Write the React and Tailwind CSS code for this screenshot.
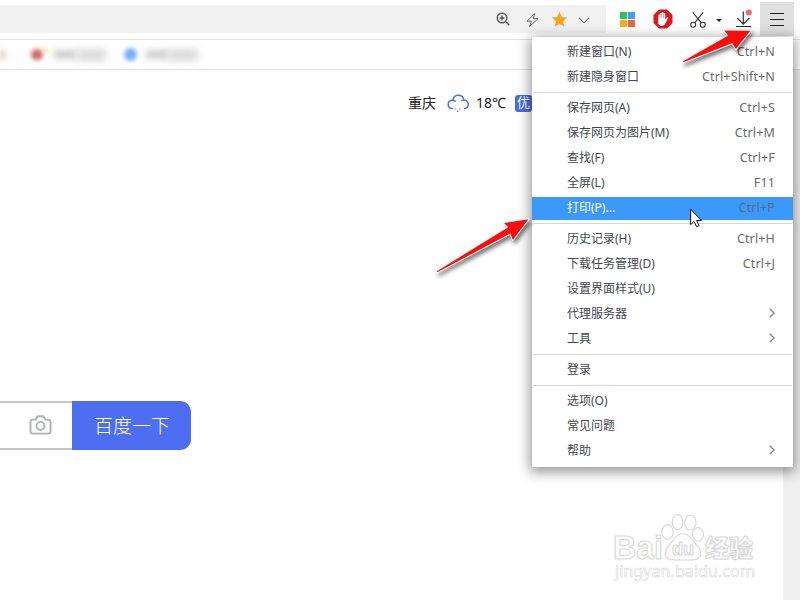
import { Fragment } from "react";

const MENU_GROUPS = [
  [
    { label: "新建窗口(N)", shortcut: "Ctrl+N" },
    { label: "新建隐身窗口", shortcut: "Ctrl+Shift+N" },
  ],
  [
    { label: "保存网页(A)", shortcut: "Ctrl+S" },
    { label: "保存网页为图片(M)", shortcut: "Ctrl+M" },
    { label: "查找(F)", shortcut: "Ctrl+F" },
    { label: "全屏(L)", shortcut: "F11" },
    { label: "打印(P)...", shortcut: "Ctrl+P", active: true },
  ],
  [
    { label: "历史记录(H)", shortcut: "Ctrl+H" },
    { label: "下载任务管理(D)", shortcut: "Ctrl+J" },
    { label: "设置界面样式(U)" },
    { label: "代理服务器", submenu: true },
    { label: "工具", submenu: true },
  ],
  [{ label: "登录" }],
  [{ label: "选项(O)" }, { label: "常见问题" }, { label: "帮助", submenu: true }],
];

function AddressBar() {
  return (
    <div className="flex h-7 w-[606px] items-center justify-end bg-[#f1f1f1] pr-4">
      <svg className="mr-[16px] h-[14px] w-[14px]" viewBox="0 0 14 14" fill="none" stroke="#555" strokeWidth="1.4">
        <circle cx="6" cy="6" r="4.8" />
        <path d="M9.5 9.5 13.3 13.3M3.6 6h4.8M6 3.6v4.8" />
      </svg>
      <svg className="mt-[2px] mr-[13px] h-[14px] w-[13px]" viewBox="0 0 13 14" fill="none" stroke="#666" strokeWidth="1" strokeLinejoin="round">
        <path d="M8.600.6 1 8.200h4.400L3.600 13.400 12 5.600H7.200z" />
      </svg>
      <svg className="mr-[11px] h-[15px] w-[15px]" viewBox="0 0 15 15" fill="#f8a51b">
        <path d="M7.5 0 9.8 5l5.2.6-3.9 3.6 1.1 5.4-4.7-2.7-4.7 2.7 1.1-5.4L0 5.600 5.200 5z" />
      </svg>
      <svg className="mt-[3px] h-[7px] w-[12px]" viewBox="0 0 12 7" fill="none" stroke="#666" strokeWidth="1.1">
        <path d="M.8.8 6 5.800 11.200.8" />
      </svg>
    </div>
  );
}

function Toolbar() {
  return (
    <div className="flex h-[39px] pt-[2px]">
      <div className="pt-[3px]">
        <AddressBar />
      </div>
      <div className="flex h-[34px] flex-1 items-center pl-[14px]">
        <div className="mt-[1px] grid h-[15px] w-[15px] grid-cols-2 gap-px">
          <span className="bg-[#2cc069]" />
          <span className="bg-[#3aa3ee]" />
          <span className="bg-[#f6ae17]" />
          <span className="bg-[#f26247]" />
        </div>
        <svg className="ml-[18px] h-5 w-5" viewBox="0 0 20 20">
          <path d="M6.100.5h7.800l5.600 5.600v7.800l-5.600 5.600H6.100L.5 13.900V6.100z" fill="#e1161c" />
          <path
            d="M5.200 9.500V6.300q0-.8.8-.8t.8.8V4.600q0-.8.9-.8t.9.8V4q0-.9.9-.9t.9.9v.7q0-.8.9-.8t.9.8v5.700l1.200-1.600q.9-.9 1.800-.2l-2.500 5.500q-1.100 2.900-3.800 2.900-3.700 0-3.700-3.800z"
            fill="#fff"
          />
          <path d="M6.900 5.500v3.500M8.700 4.800v4.100M10.500 5v4" stroke="#e1161c" strokeWidth=".4" />
        </svg>
        <svg className="ml-[17px] mt-[1px] h-4 w-4" viewBox="0 0 16 16" fill="none" stroke="#333" strokeWidth="1.1">
          <circle cx="3.200" cy="12.700" r="2.500" />
          <circle cx="12.800" cy="12.700" r="2.500" />
          <path d="M2.800.3 11.300 10.800M13.200.3 4.700 10.800" />
        </svg>
        <svg className="ml-[10px] mt-[3px] h-[3px] w-[6px]" viewBox="0 0 6 3">
          <path d="M0 0h6L3 3z" fill="#222" />
        </svg>
        <svg className="ml-[13px] -mt-[3px] h-5 w-[18px]" viewBox="0 0 18 20" fill="none">
          <path d="M8.300 3.500v12.500M2.200 10l6.100 6.200 6.100-6.200" stroke="#333" strokeWidth="1.200" />
          <path d="M1 18.500h15" stroke="#222" strokeWidth="1" />
          <circle cx="13.800" cy="4.500" r="3" fill="#ed6b6b" />
        </svg>
        <div className="ml-[7px] flex h-[34px] w-[34px] flex-col items-center justify-center gap-[5px] bg-[#e0e0e0]">
          <span className="h-px w-[14px] bg-[#222]" />
          <span className="h-px w-[14px] bg-[#222]" />
          <span className="h-px w-[14px] bg-[#222]" />
        </div>
      </div>
    </div>
  );
}

function BookmarksBar() {
  return (
    <div className="flex h-[31px] items-center overflow-hidden border-y border-[#e2e2e2]">
      <span className="h-2 w-[5px] bg-[#c9b8b2] blur-[3px]" />
      <span className="ml-[26px] h-[11px] w-[12px] rounded-full bg-[#cf6a68] blur-[2px]" />
      <span className="-mt-2 h-[5px] w-[5px] rounded-full bg-[#f5d99a] blur-[2px]" />
      <span className="ml-[6px] h-[9px] w-[22px] bg-[#cfcfcf] blur-[3px]" />
      <span className="h-[10px] w-[30px] bg-[#d4d4d4] blur-[4px]" />
      <span className="ml-[18px] h-[13px] w-[13px] rounded-full bg-[#76adfb] blur-[2px]" />
      <span className="ml-[9px] h-[9px] w-[22px] bg-[#cfcfcf] blur-[3px]" />
      <span className="h-[10px] w-[30px] bg-[#d4d4d4] blur-[4px]" />
    </div>
  );
}

function Weather() {
  return (
    <div className="-mt-px flex h-5 items-center pl-[408px] text-[14px] text-[#222]">
      <span className="w-[29px] whitespace-nowrap">重庆</span>
      <svg className="ml-[10px] mt-[2px] h-5 w-[23px]" viewBox="0 0 23 20" fill="none" stroke="#4a74e0" strokeWidth="1.500" strokeLinecap="round">
        <path d="M5.500 15.500C2.800 15.300 1.200 13.700 1.200 11.400c0-2.200 1.500-3.800 3.700-4.100M6.200 6.200C6.800 3.700 8.700 2.200 11.200 2.200c2.900 0 4.900 1.700 5.500 4.300M15 7.400c3.500-1.200 6.300.9 6.300 3.900 0 2.400-1.500 4-3.800 4.200M5.300 7.200c1.300 0 2.200.4 2.900 1.100" />
        <path d="M8.300 15.800v.1M13 15.800v.1M10.600 18.300v.1" strokeWidth="1.300" />
      </svg>
      <span className="ml-[6px] w-[31px] whitespace-nowrap">18℃</span>
      <span className="ml-[8px] mt-[2px] flex h-[17px] w-[17px] items-center justify-center rounded-[3px] bg-[#4b6ee0] text-[13px] text-white">优</span>
    </div>
  );
}

function SearchBox() {
  return (
    <div className="flex h-[49px]">
      <div className="flex w-[72px] items-center justify-end border-y-2 border-[#c4c7ce] pr-[20px]">
        <svg className="-mt-[2px] h-[20px] w-[23px]" viewBox="0 0 23 20" fill="none" stroke="#afb1b7" strokeWidth="1.900">
          <path d="M3.500 4.600h3.100l1.500-2.500q.6-.9 1.600-.9h3.600q1 0 1.600.9l1.500 2.500h3.100q2 0 2 2v10q0 2-2 2h-16q-2 0-2-2v-10q0-2 2-2z" />
          <circle cx="11.500" cy="10.900" r="4" />
        </svg>
      </div>
      <button type="button" className="w-[119px] rounded-r-[11px] bg-[#4e6ef2] pl-px font-['Noto_Sans_CJK_SC',sans-serif] text-[19px] font-light text-white">
        百度一下
      </button>
    </div>
  );
}

function MenuItem({ label, shortcut, submenu, active }) {
  return (
    <div className="h-[25px] pt-[2px]">
      <div className={active ? "flex h-[23px] items-center bg-[#3b99fc] pr-[18px] pb-[2px] pl-[35px] text-white" : "flex h-[23px] items-center pr-[18px] pb-[2px] pl-[35px] text-[#44484d]"}>
        <span className="flex-1 whitespace-nowrap">{label}</span>
        {shortcut && (
          <span className={active ? "pt-[2px] text-[12.500px] tracking-[0.15px] text-[#5a6b82]" : "pt-[2px] text-[12.500px] tracking-[0.15px] text-[#6a6a6a]"}>
            {shortcut}
          </span>
        )}
        {submenu && (
          <svg className="mt-[-2px] h-[10px] w-[6px]" viewBox="0 0 6 10" fill="none" stroke="#858585" strokeWidth="1.300">
            <path d="M.7.700 5.100 5 .7 9.300" />
          </svg>
        )}
      </div>
    </div>
  );
}

function BrowserMenu() {
  return (
    <div className="absolute top-[37px] left-[532px] h-[430px] w-[261px] bg-white pt-[2px] text-[12px] shadow-[0_3px_12px_2px_rgba(0,0,0,0.42)]">
      {MENU_GROUPS.map((group, i) => (
        <Fragment key={i}>
          {i > 0 && <div className="mx-px mt-[3px] mb-[2px] h-px bg-[#d5d5d5]" />}
          {group.map((item) => (
            <MenuItem key={item.label} {...item} />
          ))}
        </Fragment>
      ))}
    </div>
  );
}

function Watermark() {
  return (
    <div className="absolute top-[512px] left-[612px] h-[72px] w-[146px]">
      <svg className="h-full w-full" viewBox="0 0 146 72" fill="#fff" stroke="#dadada" strokeWidth="1.200" strokeLinejoin="round">
        <text x="1" y="47" fontSize="33" fontWeight="700" fontFamily="'Liberation Sans', sans-serif" textLength="50" lengthAdjust="spacingAndGlyphs">Bai</text>
        <ellipse cx="55.500" cy="20" rx="5.700" ry="7.300" />
        <ellipse cx="65.500" cy="10" rx="5.300" ry="7.700" />
        <ellipse cx="78.300" cy="10.500" rx="5.700" ry="7.500" />
        <ellipse cx="86" cy="22.500" rx="5.500" ry="7" />
        <path d="M71 21.500c6 0 8.500 5.500 12 9.500 4 4.500 6.500 7.500 5.500 11.500-1.500 6-6.500 5.500-17.500 5.500s-16 .5-17.500-5.500c-1-4 1.500-7 5.500-11.500 3.500-4 6-9.500 12-9.500z" />
        <text x="60" y="43" fontSize="19" fontWeight="700" fontFamily="'Liberation Sans', sans-serif" textLength="22" lengthAdjust="spacingAndGlyphs">du</text>
        <text x="93" y="44.500" fontSize="24" fontWeight="900" fontFamily="'Noto Sans CJK SC', sans-serif" textLength="48" lengthAdjust="spacingAndGlyphs">经验</text>
        <text x="3" y="65" fontSize="15.500" strokeWidth=".6" fontFamily="'Noto Sans', sans-serif" fontWeight="400" textLength="140" lengthAdjust="spacingAndGlyphs">jingyan.baidu.com</text>
      </svg>
    </div>
  );
}

// Red pointers and the mouse cursor float over the page and the menu
function Annotations() {
  return (
    <>
      <svg className="absolute top-[20px] left-[672px] h-[54px] w-[90px] drop-shadow-[2px_3px_2px_rgba(0,0,0,0.55)]" viewBox="672 20 90 54">
        <path d="M750.500 30.700 724 30.500l4.300 5L683 61.200l.4 1 48.800-19 3.700 5.800z" fill="#fb0d0d" stroke="#fff" strokeWidth="2" strokeLinejoin="round" paintOrder="stroke" />
      </svg>
      <svg className="absolute top-[210px] left-[425px] h-[75px] w-[115px] drop-shadow-[2px_3px_2px_rgba(0,0,0,0.55)]" viewBox="425 210 115 75">
        <path d="M528.500 219.200 504 222.900l4.200 4.300L436.800 271.200l.5 1L510.300 233.500l2.600 6.500z" fill="#fb0d0d" stroke="#fff" strokeWidth="2" strokeLinejoin="round" paintOrder="stroke" />
      </svg>
      <svg className="absolute top-[208px] left-[690px] h-[20px] w-[13px]" viewBox="0 0 13 20">
        <path d="M.6 1.200v15.500l3.500-3.300 2.500 5.400 2.400-1.100-2.400-5.200h4.900z" fill="#fff" stroke="#111" strokeWidth="1" />
      </svg>
    </>
  );
}

export default function App() {
  return (
    <div className="relative flex h-[600px] w-[800px] flex-col overflow-hidden bg-white font-['Noto_Sans','Noto_Sans_CJK_SC',sans-serif]">
      <Toolbar />
      <BookmarksBar />
      <div className="flex flex-1">
        <main className="w-[783px] pt-[23px]">
          <Weather />
          <div className="pt-[289px]">
            <SearchBox />
          </div>
        </main>
        <aside className="w-[17px] bg-[#f0f0f0]" />
      </div>
      <Watermark />
      <BrowserMenu />
      <Annotations />
    </div>
  );
}
